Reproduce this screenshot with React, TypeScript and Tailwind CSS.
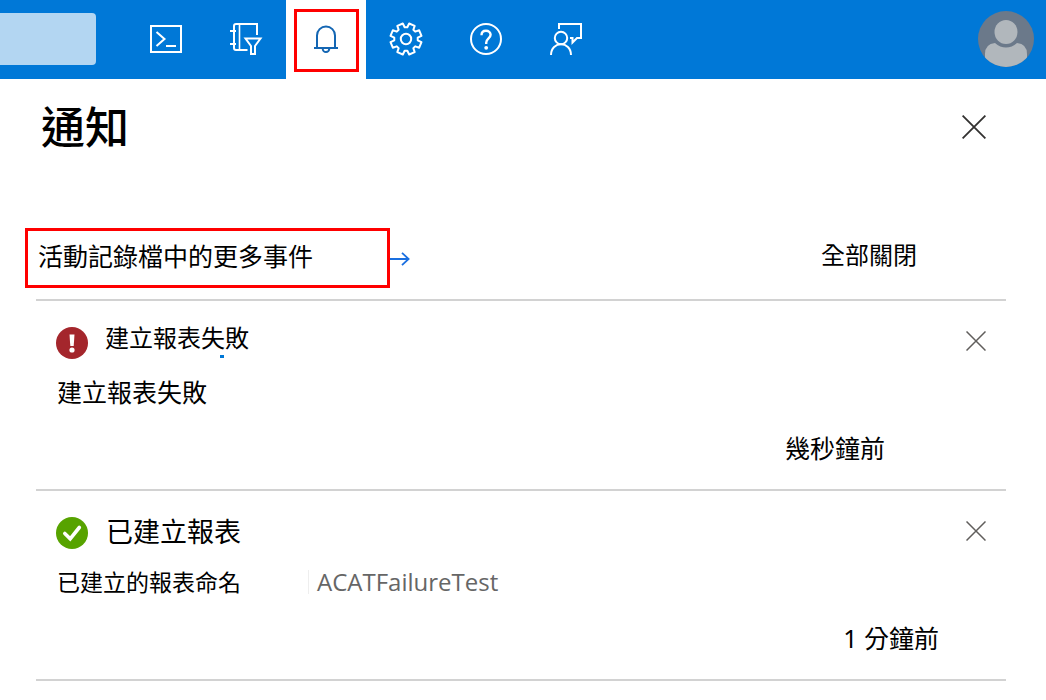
import type { ReactNode } from "react";

function Glyph({ children }: { children: ReactNode }) {
  return (
    <svg
      width="36"
      height="36"
      viewBox="0 0 36 36"
      fill="none"
      stroke="currentColor"
      strokeWidth="2"
      aria-hidden="true"
    >
      {children}
    </svg>
  );
}

function gearPath(): string {
  const teeth = 8;
  const outer = 15.8;
  const inner = 11.8;
  const points: string[] = [];
  for (let i = 0; i < teeth; i++) {
    const mid = ((i + 0.5) * 2 * Math.PI) / teeth;
    const corners: [number, number][] = [
      [-0.28, inner],
      [-0.19, outer],
      [0.19, outer],
      [0.28, inner],
    ];
    for (const [offset, radius] of corners) {
      const x = 18 + radius * Math.cos(mid + offset);
      const y = 18 + radius * Math.sin(mid + offset);
      points.push(`${x.toFixed(2)} ${y.toFixed(2)}`);
    }
  }
  return `M${points.join("L")}Z`;
}

const tools = [
  {
    label: "Cloud Shell",
    icon: (
      <Glyph>
        <path d="M3 5h30v26H3z" />
        <path d="M8.500 11l8 7-8 7M18 25h10" />
      </Glyph>
    ),
  },
  {
    label: "目錄和訂用帳戶",
    icon: (
      <Glyph>
        <path d="M29 14V3H8Q6 3 6 5V27Q6 29 8 29H19.500M2 10H8M2 23H8" />
        <path d="M11.500 3V29" strokeWidth="1.600" />
        <path d="M17.500 17.500H32.500L27 25V33H23V25Z" />
      </Glyph>
    ),
  },
  {
    label: "通知",
    active: true,
    icon: (
      <Glyph>
        <path d="M6 27H30M9 27V14.500A9 9 0 0 1 27 14.500V27" />
        <path d="M14.700 27.500A3.300 3.600 0 0 0 21.300 27.500" />
      </Glyph>
    ),
  },
  {
    label: "設定",
    icon: (
      <Glyph>
        <path d={gearPath()} strokeLinejoin="round" />
        <circle cx="18" cy="18" r="5.200" />
      </Glyph>
    ),
  },
  {
    label: "說明",
    icon: (
      <Glyph>
        <circle cx="18" cy="18" r="15" />
        <path
          d="M13.500 14.200C13.500 11 15.500 9.700 18 9.700S22.600 11.300 22.600 13.800C22.600 17.200 18.200 17.800 18.200 21.800V23"
          strokeWidth="2.400"
        />
        <circle cx="18.200" cy="26.800" r="1.900" fill="currentColor" stroke="none" />
      </Glyph>
    ),
  },
  {
    label: "意見反應",
    icon: (
      <Glyph>
        <circle cx="13" cy="17" r="6.200" />
        <path d="M3 34C3 19.700 23 19.700 23 34" />
        <path d="M11 8V3H33V17H29L24.500 21.500V17H22" />
      </Glyph>
    ),
  },
];

function Cross({ size }: { size: number }) {
  return (
    <svg
      width={size}
      height={size}
      viewBox="0 0 24 24"
      fill="none"
      stroke="currentColor"
      strokeWidth="1.800"
      aria-hidden="true"
    >
      <path d="M.6.6 23.400 23.400M23.400.6.6 23.400" />
    </svg>
  );
}

function ErrorIcon() {
  return (
    <svg width="32" height="32" viewBox="0 0 32 32" aria-hidden="true">
      <circle cx="16" cy="16" r="16" fill="#a4262c" />
      <path d="M13.500 7.500h5l-.8 11.500h-3.400z" fill="#fff" />
      <circle cx="16" cy="23" r="2.600" fill="#fff" />
    </svg>
  );
}

function SuccessIcon() {
  return (
    <svg width="32" height="32" viewBox="0 0 32 32" aria-hidden="true">
      <circle cx="16" cy="16" r="16" fill="#57a300" />
      <path
        d="M8.800 16.500l5.400 5.300L23.300 10.500"
        fill="none"
        stroke="#fff"
        strokeWidth="3.600"
        strokeLinecap="round"
      />
    </svg>
  );
}

function Avatar() {
  return (
    <svg width="56" height="56" viewBox="0 0 56 56" aria-hidden="true">
      <clipPath id="avatar-clip">
        <circle cx="28" cy="28" r="28" />
      </clipPath>
      <g clipPath="url(#avatar-clip)">
        <path fill="#6b798a" d="M0 0h56v56H0z" />
        <path
          fill="#b1b7bc"
          d="M7 56V43Q7 33 17 32Q22 36.500 28 36.500T39 32Q49 33 49 43V56Z"
        />
        <ellipse cx="28" cy="21" rx="11.500" ry="12" fill="#b1b7bc" />
      </g>
    </svg>
  );
}

interface NoticeProps {
  icon: ReactNode;
  title: ReactNode;
  body: ReactNode;
  time: ReactNode;
}

function Notice({ icon, title, body, time }: NoticeProps) {
  return (
    <li className="border-b-2 border-[#d2d2d2] pt-[22px] pr-5 pb-[25px] pl-5">
      <div className="flex h-10 items-center">
        {icon}
        {title}
        <button type="button" aria-label="關閉" className="ml-auto pb-1 text-[#605e5c]">
          <Cross size={20} />
        </button>
      </div>
      <div className="mt-[13px] flex h-8 items-center pl-px">{body}</div>
      <div className="mt-6 flex h-8 items-center justify-end text-[25px] leading-8">{time}</div>
    </li>
  );
}

export default function App() {
  return (
    <div className="min-h-screen bg-white font-['Noto_Sans','Noto_Sans_CJK_TC',sans-serif] text-black">
      <header className="flex h-[79px] items-center bg-[#0078d7] pr-3 text-white">
        <div className="pb-0.5">
          <input
            type="search"
            aria-label="搜尋"
            className="block h-[52px] w-24 rounded-r bg-[#b3d6f2] outline-none"
          />
        </div>
        <nav className="ml-[30px] flex h-full">
          {tools.map((tool) => (
            <button
              key={tool.label}
              type="button"
              aria-label={tool.label}
              className={
                tool.active
                  ? "flex w-20 items-center justify-center bg-white pt-0.5 text-[#1466b3]"
                  : "flex w-20 items-center justify-center pb-0.5"
              }
            >
              {tool.active ? (
                <span className="flex h-[63px] w-[65px] items-center justify-center border-3 border-[#ff0000] pb-1">
                  {tool.icon}
                </span>
              ) : (
                tool.icon
              )}
            </button>
          ))}
        </nav>
        <button type="button" aria-label="帳戶" className="ml-auto pb-0.5">
          <Avatar />
        </button>
      </header>

      <main>
        <div className="flex h-24 items-center pr-[60px] pl-[41px]">
          <h1 className="pb-1 font-['Noto_Sans_CJK_TC',sans-serif] text-[44px] leading-none font-medium">
            通知
          </h1>
          <button type="button" aria-label="關閉通知" className="ml-auto text-[#323130]">
            <Cross size={24} />
          </button>
        </div>

        <div className="mt-[53px] flex items-center pr-[129px] pl-[25px]">
          <a
            href="#activity-log"
            className="flex h-[60px] w-[365px] items-center border-3 border-[#ff0000] px-[10px] pb-1 text-[25px] leading-8"
          >
            活動記錄檔中的更多事件
          </a>
          <svg
            width="20"
            height="16"
            viewBox="0 0 20 16"
            fill="none"
            stroke="#1a6fe0"
            strokeWidth="1.800"
            aria-hidden="true"
          >
            <path d="M0 9H18.500M12 2.800 18.600 9 12 15.200" />
          </svg>
          <button type="button" className="ml-auto pb-1.5 text-[24px] leading-8">
            全部關閉
          </button>
        </div>

        <ul className="mr-10 ml-9 mt-[11px] border-t-2 border-[#d2d2d2]">
          <Notice
            icon={<ErrorIcon />}
            title={
              <h2 className="relative ml-[17px] pb-2.5 text-[24px] leading-8">
                建立報表失敗
                <span className="absolute right-[25px] bottom-1.5 h-[3px] w-1 bg-[#0078d7]" />
              </h2>
            }
            body={<p className="text-[25px] leading-8">建立報表失敗</p>}
            time={<time className="mr-[101px]">幾秒鐘前</time>}
          />
          <Notice
            icon={<SuccessIcon />}
            title={<h2 className="ml-[18px] pb-0.5 text-[27px] leading-8">已建立報表</h2>}
            body={
              <>
                <p className="text-[23px] leading-8">已建立的報表命名</p>
                <span className="ml-[67px] border-l border-[#eeeeee] pl-2 font-['Open_Sans',sans-serif] text-[24px] leading-6 text-[#666666]">
                  ACATFailureTest
                </span>
              </>
            }
            time={<time className="mr-[47px]">1 分鐘前</time>}
          />
        </ul>
      </main>
    </div>
  );
}
